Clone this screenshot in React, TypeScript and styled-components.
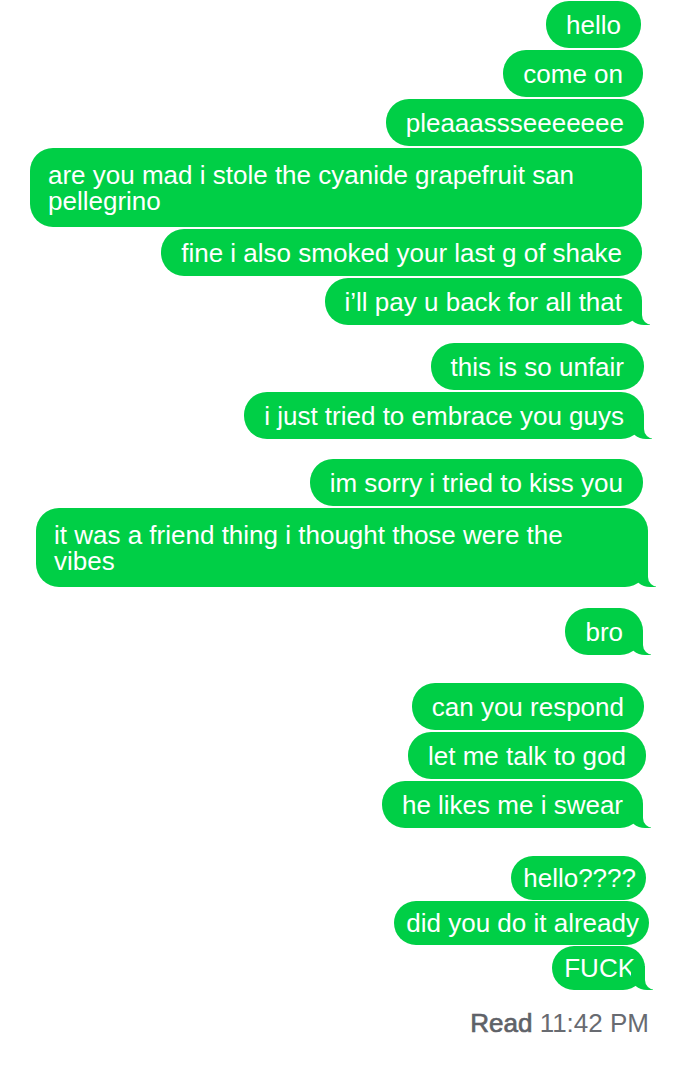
import styled, { createGlobalStyle } from "styled-components";

const GREEN = "#00cf46";

const GlobalStyle = createGlobalStyle`
  html, body {
    margin: 0;
    padding: 0;
    background: #ffffff;
  }
  body {
    font-family: "Liberation Sans", Arial, Helvetica, sans-serif;
    -webkit-font-smoothing: antialiased;
  }
`;

const Thread = styled.div`
  display: flex;
  flex-direction: column;
  align-items: flex-end;
  padding: 1px 32px 40px 0;
`;

const Group = styled.div<{ $space: number; $compact?: boolean }>`
  display: flex;
  flex-direction: column;
  align-items: flex-end;
  gap: ${(p) => (p.$compact ? 1 : 2)}px;
  margin-top: ${(p) => p.$space}px;
`;

const Bubble = styled.div<{ $tail?: boolean; $multi?: boolean; $compact?: boolean; $nudge?: number }>`
  position: relative;
  max-width: 612px;
  box-sizing: border-box;
  padding: ${(p) => (p.$multi ? "13.5px 24px 13.5px 18px" : p.$compact ? "9px 10px 9px 12px" : "10.5px 20px")};
  margin-right: ${(p) => -(p.$nudge || 0)}px;
  background: ${GREEN};
  color: #ffffff;
  font-size: 26px;
  line-height: 26px;
  border-radius: 23px;
  white-space: normal;

  ${(p) =>
    p.$tail &&
    `
    &::before, &::after {
      content: "";
      position: absolute;
      bottom: 0;
      height: 24px;
    }
    &::before {
      right: -8px;
      width: 22px;
      background: ${GREEN};
      border-bottom-left-radius: 16px 14px;
    }
    &::after {
      right: -26px;
      width: 26px;
      background: #ffffff;
      border-bottom-left-radius: 10px;
    }
  `}
`;

const Receipt = styled.div`
  margin-top: 18px;
  margin-right: -6px;
  font-size: 26px;
  line-height: 30px;
  color: #686b71;

  b {
    font-weight: 400;
    color: #5f6268;
    -webkit-text-stroke: 0.7px #5f6268;
  }
`;

type Msg = { text: string; tail?: boolean; multi?: boolean; nudge?: number };
type Block = { space: number; compact?: boolean; msgs: Msg[] };

const blocks: Block[] = [
  {
    space: 0,
    msgs: [
      { text: "hello", nudge: -2 },
      { text: "come on" },
      { text: "pleaaassseeeeeee", nudge: 1 },
      { text: "are you mad i stole the cyanide grapefruit san pellegrino", multi: true, nudge: -1 },
      { text: "fine i also smoked your last g of shake", nudge: -1 },
      { text: "i’ll pay u back for all that", tail: true, nudge: -1 },
    ],
  },
  {
    space: 18,
    msgs: [
      { text: "this is so unfair", nudge: 1 },
      { text: "i just tried to embrace you guys", tail: true, nudge: 1 },
    ],
  },
  {
    space: 20,
    msgs: [
      { text: "im sorry i tried to kiss you" },
      { text: "it was a friend thing i thought those were the vibes", multi: true, tail: true, nudge: 5 },
    ],
  },
  {
    space: 21,
    msgs: [{ text: "bro", tail: true }],
  },
  {
    space: 28,
    msgs: [
      { text: "can you respond", nudge: 1 },
      { text: "let me talk to god", nudge: 3 },
      { text: "he likes me i swear", tail: true },
    ],
  },
  {
    space: 28,
    compact: true,
    msgs: [
      { text: "hello????", nudge: 3 },
      { text: "did you do it already", nudge: 6 },
      { text: "FUCK", tail: true, nudge: 2 },
    ],
  },
];

export default function App() {
  return (
    <>
      <GlobalStyle />
      <Thread>
        {blocks.map((block, i) => (
          <Group key={i} $space={block.space} $compact={block.compact}>
            {block.msgs.map((m) => (
              <Bubble key={m.text} $tail={m.tail} $multi={m.multi} $compact={block.compact} $nudge={m.nudge}>
                {m.text}
              </Bubble>
            ))}
          </Group>
        ))}
        <Receipt>
          <b>Read</b> 11:42 PM
        </Receipt>
      </Thread>
    </>
  );
}
